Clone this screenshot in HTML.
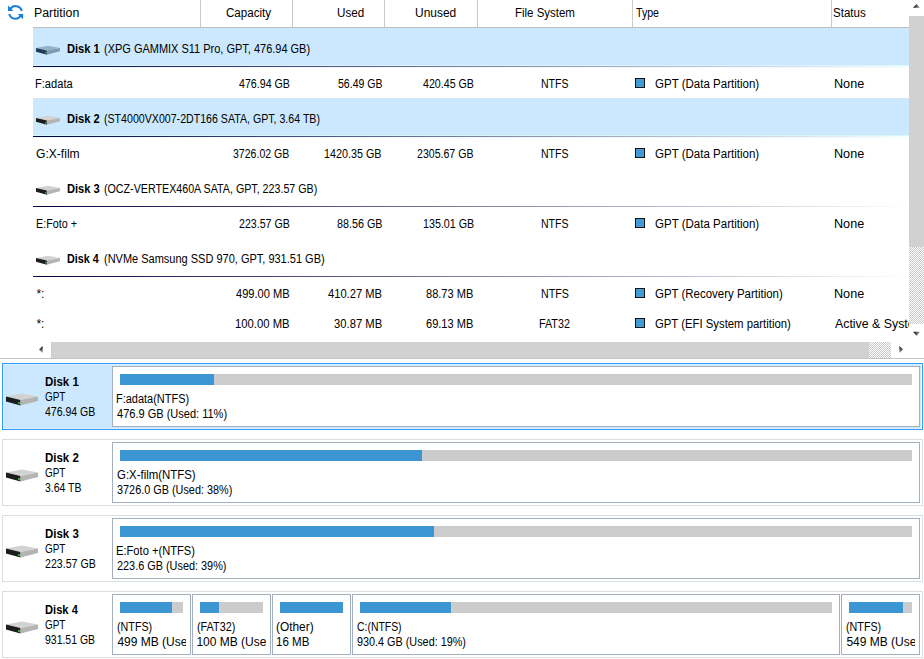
<!DOCTYPE html>
<html><head><meta charset="utf-8"><style>
html,body{margin:0;padding:0;background:#fff;}
body{width:924px;height:659px;position:relative;overflow:hidden;font-family:"Liberation Sans", sans-serif;color:#000;}
.t{position:absolute;transform-origin:0 0;white-space:nowrap;line-height:normal;font-family:"Liberation Sans", sans-serif;font-size:12px;}
.r{position:absolute;}
</style></head><body>
<svg class="r" style="left:0;top:0" width="30" height="26" viewBox="0 0 30 26">
<g fill="none" stroke="#1a80d9" stroke-width="2">
<path d="M10.1 9.2 A6.4 6.4 0 0 1 21.8 10.9"/>
<path d="M9.2 14 A6.4 6.4 0 0 0 20.9 15.6"/>
</g>
<path d="M8 5.6 L8 11 L13.4 11 Z" fill="#1a80d9"/>
<path d="M23.1 19.2 L23.1 13.9 L17.7 13.9 Z" fill="#1a80d9"/>
</svg><div class="t" style="left:34.47px;top:6px;transform:scaleX(1.0279);">Partition</div><div class="t" style="left:226.40px;top:6px;transform:scaleX(0.9660);">Capacity</div><div class="t" style="left:337.43px;top:6px;transform:scaleX(0.9731);">Used</div><div class="t" style="left:415.30px;top:6px;transform:scaleX(0.9975);">Unused</div><div class="t" style="left:515.24px;top:6px;transform:scaleX(0.9557);">File System</div><div class="t" style="left:636.00px;top:6px;transform:scaleX(0.8846);">Type</div><div class="t" style="left:833.34px;top:6px;transform:scaleX(0.9636);">Status</div><div class="r" style="left:200px;top:0px;width:1px;height:27px;background:#c9c9c9;"></div><div class="r" style="left:292px;top:0px;width:1px;height:27px;background:#c9c9c9;"></div><div class="r" style="left:384px;top:0px;width:1px;height:27px;background:#c9c9c9;"></div><div class="r" style="left:477px;top:0px;width:1px;height:27px;background:#c9c9c9;"></div><div class="r" style="left:632px;top:0px;width:1px;height:27px;background:#c9c9c9;"></div><div class="r" style="left:831px;top:0px;width:1px;height:27px;background:#c9c9c9;"></div><div class="r" style="left:33px;top:27px;width:876px;height:1px;background:#bfbfbf;"></div><div class="r" style="left:0;top:28px;width:909px;height:314px;overflow:hidden"><div class="r" style="left:33px;top:0px;width:876px;height:37px;background:#cce8ff;"></div><div class="r" style="left:33px;top:37px;width:876px;height:1px;background:#d9f6ff;"></div><div class="r" style="left:33px;top:39px;width:876px;height:1px;background:#e9fcff;"></div><div class="r" style="left:33px;top:38px;width:876px;height:1px;background:linear-gradient(to right,#000040,#ffffff);"></div><svg class="r" style="left:36px;top:17px" width="24" height="11" viewBox="0 0 32 13">
<polygon points="0,3 16,0 32,3 14.5,6.5" fill="#94b2cb"/>
<polygon points="0,3 14.5,6.5 14.5,12 0,8" fill="#1d3d57"/>
<polygon points="14.5,6.5 32,3 32,7.5 14.5,12" fill="#7b9bb5"/>
<circle cx="13" cy="9.6" r="1.1" fill="#22c83a"/>
</svg><div class="t" style="left:66.87px;top:14px;transform:scaleX(0.9265);font-weight:bold;">Disk 1</div><div class="t" style="left:103.88px;top:14px;transform:scaleX(0.9152);">(XPG GAMMIX S11 Pro, GPT, 476.94 GB)</div><div class="t" style="left:35.48px;top:49px;transform:scaleX(0.9250);">F:adata</div><div class="t" style="left:238.90px;top:49px;transform:scaleX(0.8877);">476.94 GB</div><div class="t" style="left:337.70px;top:49px;transform:scaleX(0.8780);">56.49 GB</div><div class="t" style="left:422.80px;top:49px;transform:scaleX(0.8877);">420.45 GB</div><div class="t" style="left:540.82px;top:49px;transform:scaleX(0.8767);">NTFS</div><div class="r" style="left:635px;top:50px;width:10px;height:10px;background:#409ad6;box-sizing:border-box;border:1px solid #111"></div><div class="t" style="left:655.20px;top:49px;transform:scaleX(0.9602);">GPT (Data Partition)</div><div class="t" style="left:834.35px;top:49px;transform:scaleX(1.0519);">None</div><div class="r" style="left:33px;top:70px;width:876px;height:37px;background:#cce8ff;"></div><div class="r" style="left:33px;top:107px;width:876px;height:1px;background:#d9f6ff;"></div><div class="r" style="left:33px;top:109px;width:876px;height:1px;background:#e9fcff;"></div><div class="r" style="left:33px;top:108px;width:876px;height:1px;background:linear-gradient(to right,#000040,#ffffff);"></div><svg class="r" style="left:36px;top:87px" width="24" height="11" viewBox="0 0 32 13">
<polygon points="0,3 16,0 32,3 14.5,6.5" fill="#d2d2d2"/>
<polygon points="0,3 14.5,6.5 14.5,12 0,8" fill="#1c1c1c"/>
<polygon points="14.5,6.5 32,3 32,7.5 14.5,12" fill="#b4b4b4"/>
<circle cx="13" cy="9.6" r="1.1" fill="#22c83a"/>
</svg><div class="t" style="left:66.87px;top:84px;transform:scaleX(0.9265);font-weight:bold;">Disk 2</div><div class="t" style="left:103.92px;top:84px;transform:scaleX(0.8848);">(ST4000VX007-2DT166 SATA, GPT, 3.64 TB)</div><div class="t" style="left:36.40px;top:119px;transform:scaleX(1.0070);">G:X-film</div><div class="t" style="left:233.20px;top:119px;transform:scaleX(0.8797);">3726.02 GB</div><div class="t" style="left:324.10px;top:119px;transform:scaleX(0.8968);">1420.35 GB</div><div class="t" style="left:417.20px;top:119px;transform:scaleX(0.8812);">2305.67 GB</div><div class="t" style="left:540.82px;top:119px;transform:scaleX(0.8767);">NTFS</div><div class="r" style="left:635px;top:120px;width:10px;height:10px;background:#409ad6;box-sizing:border-box;border:1px solid #111"></div><div class="t" style="left:655.20px;top:119px;transform:scaleX(0.9602);">GPT (Data Partition)</div><div class="t" style="left:834.35px;top:119px;transform:scaleX(1.0519);">None</div><div class="r" style="left:33px;top:178px;width:876px;height:1px;background:linear-gradient(to right,#000040,#ffffff);"></div><svg class="r" style="left:36px;top:157px" width="24" height="11" viewBox="0 0 32 13">
<polygon points="0,3 16,0 32,3 14.5,6.5" fill="#d2d2d2"/>
<polygon points="0,3 14.5,6.5 14.5,12 0,8" fill="#1c1c1c"/>
<polygon points="14.5,6.5 32,3 32,7.5 14.5,12" fill="#b4b4b4"/>
<circle cx="13" cy="9.6" r="1.1" fill="#22c83a"/>
</svg><div class="t" style="left:66.87px;top:154px;transform:scaleX(0.9265);font-weight:bold;">Disk 3</div><div class="t" style="left:103.91px;top:154px;transform:scaleX(0.8908);">(OCZ-VERTEX460A SATA, GPT, 223.57 GB)</div><div class="t" style="left:35.50px;top:189px;transform:scaleX(0.8978);">E:Foto +</div><div class="t" style="left:239.00px;top:189px;transform:scaleX(0.8860);">223.57 GB</div><div class="t" style="left:336.80px;top:189px;transform:scaleX(0.8960);">88.56 GB</div><div class="t" style="left:422.71px;top:189px;transform:scaleX(0.8929);">135.01 GB</div><div class="t" style="left:540.82px;top:189px;transform:scaleX(0.8767);">NTFS</div><div class="r" style="left:635px;top:190px;width:10px;height:10px;background:#409ad6;box-sizing:border-box;border:1px solid #111"></div><div class="t" style="left:655.20px;top:189px;transform:scaleX(0.9602);">GPT (Data Partition)</div><div class="t" style="left:834.35px;top:189px;transform:scaleX(1.0519);">None</div><div class="r" style="left:33px;top:248px;width:876px;height:1px;background:linear-gradient(to right,#000040,#ffffff);"></div><svg class="r" style="left:36px;top:227px" width="24" height="11" viewBox="0 0 32 13">
<polygon points="0,3 16,0 32,3 14.5,6.5" fill="#d2d2d2"/>
<polygon points="0,3 14.5,6.5 14.5,12 0,8" fill="#1c1c1c"/>
<polygon points="14.5,6.5 32,3 32,7.5 14.5,12" fill="#b4b4b4"/>
<circle cx="13" cy="9.6" r="1.1" fill="#22c83a"/>
</svg><div class="t" style="left:66.90px;top:224px;transform:scaleX(0.9000);font-weight:bold;">Disk 4</div><div class="t" style="left:103.88px;top:224px;transform:scaleX(0.9163);">(NVMe Samsung SSD 970, GPT, 931.51 GB)</div><div class="t" style="left:36.40px;top:259px;transform:scaleX(1.0000);">*:</div><div class="t" style="left:236.40px;top:259px;transform:scaleX(0.9241);">499.00 MB</div><div class="t" style="left:327.90px;top:259px;transform:scaleX(0.9293);">410.27 MB</div><div class="t" style="left:425.80px;top:259px;transform:scaleX(0.9216);">88.73 MB</div><div class="t" style="left:540.61px;top:259px;transform:scaleX(0.8900);">NTFS</div><div class="r" style="left:635px;top:260px;width:10px;height:10px;background:#409ad6;box-sizing:border-box;border:1px solid #111"></div><div class="t" style="left:655.20px;top:259px;transform:scaleX(0.9549);">GPT (Recovery Partition)</div><div class="t" style="left:834.35px;top:259px;transform:scaleX(1.0519);">None</div><div class="t" style="left:36.40px;top:289px;transform:scaleX(1.0000);">*:</div><div class="t" style="left:235.46px;top:289px;transform:scaleX(0.9404);">100.00 MB</div><div class="t" style="left:334.00px;top:289px;transform:scaleX(0.9373);">30.87 MB</div><div class="t" style="left:425.80px;top:289px;transform:scaleX(0.9216);">69.13 MB</div><div class="t" style="left:539.40px;top:289px;transform:scaleX(0.8970);">FAT32</div><div class="r" style="left:635px;top:290px;width:10px;height:10px;background:#409ad6;box-sizing:border-box;border:1px solid #111"></div><div class="t" style="left:655.20px;top:289px;transform:scaleX(0.9441);">GPT (EFI System partition)</div><div class="t" style="left:835.40px;top:289px;transform:scaleX(1.0300);">Active &amp; System</div></div><div class="r" style="left:909px;top:16px;width:15px;height:231px;background:#d1d1d1;"></div><div class="r" style="left:909px;top:247px;width:15px;height:77px;background:repeating-conic-gradient(#c8c8c8 0 25%, #ffffff 0 50%) 0 0/2px 2px;"></div><svg class="r" style="left:0;top:0" width="924" height="359"><defs><linearGradient id="gl" x1="0" y1="0" x2="1" y2="0"><stop offset="0" stop-color="#000"/><stop offset="1" stop-color="#aaa"/></linearGradient><linearGradient id="gr" x1="1" y1="0" x2="0" y2="0"><stop offset="0" stop-color="#000"/><stop offset="1" stop-color="#aaa"/></linearGradient><linearGradient id="gt" x1="0" y1="0" x2="0" y2="1"><stop offset="0" stop-color="#000"/><stop offset="1" stop-color="#aaa"/></linearGradient></defs><polygon points="913,7.8 916.5,4 920,7.8" fill="url(#gl)"/><polygon points="913,331.8 920,331.8 916.5,335.8" fill="url(#gl)"/><polygon points="39,349.5 42.6,346 42.6,353" fill="url(#gt)"/><polygon points="903,349.5 899.4,346 899.4,353" fill="url(#gt)"/></svg><div class="r" style="left:51px;top:342px;width:818px;height:16px;background:#d1d1d1;"></div><div class="r" style="left:869px;top:342px;width:22px;height:16px;background:repeating-conic-gradient(#c8c8c8 0 25%, #ffffff 0 50%) 1px 0/2px 2px;"></div><div class="r" style="left:0px;top:358px;width:924px;height:1px;background:#c4c4c4;"></div><div class="r" style="left:2px;top:363px;width:921px;height:67px;background:#cce8ff;box-sizing:border-box;border:1px solid #3399ff;box-shadow:inset 0 0 0 1px #d9f0ff"></div><div class="r" style="left:921px;top:364px;width:1px;height:65px;background:#ffffff;"></div><svg class="r" style="left:6px;top:393px" width="32" height="14" viewBox="0 0 32 13">
<polygon points="0,3 16,0 32,3 14.5,6.5" fill="#d2d2d2"/>
<polygon points="0,3 14.5,6.5 14.5,12 0,8" fill="#1c1c1c"/>
<polygon points="14.5,6.5 32,3 32,7.5 14.5,12" fill="#b4b4b4"/>
<circle cx="13" cy="9.6" r="1.1" fill="#22c83a"/>
</svg><div class="t" style="left:44.54px;top:375px;transform:scaleX(0.9559);font-weight:bold;">Disk 1</div><div class="t" style="left:45.40px;top:390px;transform:scaleX(0.8240);">GPT</div><div class="t" style="left:45.40px;top:405px;transform:scaleX(0.8772);">476.94 GB</div><div class="r" style="left:112px;top:366px;width:808px;height:61px;box-sizing:border-box;border:1px solid #a3aec0;background:#fff;"><div class="r" style="left:7px;top:7px;width:792px;height:11px;background:#cccccc;"></div><div class="r" style="left:7px;top:7px;width:94px;height:11px;background:#3d96d4;"></div><div class="r" style="left:0;top:0;width:802px;height:59px;overflow:hidden"><div class="t" style="left:3.49px;top:25px;transform:scaleX(0.9139);">F:adata(NTFS)</div><div class="t" style="left:4.40px;top:40px;transform:scaleX(0.9185);">476.9 GB (Used: 11%)</div></div></div><div class="r" style="left:2px;top:439px;width:921px;height:67px;background:#ffffff;box-sizing:border-box;border:1px solid #d9dde4"></div><svg class="r" style="left:6px;top:469px" width="32" height="14" viewBox="0 0 32 13">
<polygon points="0,3 16,0 32,3 14.5,6.5" fill="#d2d2d2"/>
<polygon points="0,3 14.5,6.5 14.5,12 0,8" fill="#1c1c1c"/>
<polygon points="14.5,6.5 32,3 32,7.5 14.5,12" fill="#b4b4b4"/>
<circle cx="13" cy="9.6" r="1.1" fill="#22c83a"/>
</svg><div class="t" style="left:44.54px;top:451px;transform:scaleX(0.9559);font-weight:bold;">Disk 2</div><div class="t" style="left:45.40px;top:466px;transform:scaleX(0.8240);">GPT</div><div class="t" style="left:45.40px;top:481px;transform:scaleX(0.8707);">3.64 TB</div><div class="r" style="left:112px;top:442px;width:808px;height:61px;box-sizing:border-box;border:1px solid #a3aec0;background:#fff;"><div class="r" style="left:7px;top:7px;width:792px;height:11px;background:#cccccc;"></div><div class="r" style="left:7px;top:7px;width:302px;height:11px;background:#3d96d4;"></div><div class="r" style="left:0;top:0;width:802px;height:59px;overflow:hidden"><div class="t" style="left:4.40px;top:25px;transform:scaleX(0.9512);">G:X-film(NTFS)</div><div class="t" style="left:4.40px;top:40px;transform:scaleX(0.9055);">3726.0 GB (Used: 38%)</div></div></div><div class="r" style="left:2px;top:515px;width:921px;height:67px;background:#ffffff;box-sizing:border-box;border:1px solid #d9dde4"></div><svg class="r" style="left:6px;top:545px" width="32" height="14" viewBox="0 0 32 13">
<polygon points="0,3 16,0 32,3 14.5,6.5" fill="#d2d2d2"/>
<polygon points="0,3 14.5,6.5 14.5,12 0,8" fill="#1c1c1c"/>
<polygon points="14.5,6.5 32,3 32,7.5 14.5,12" fill="#b4b4b4"/>
<circle cx="13" cy="9.6" r="1.1" fill="#22c83a"/>
</svg><div class="t" style="left:44.54px;top:527px;transform:scaleX(0.9559);font-weight:bold;">Disk 3</div><div class="t" style="left:45.40px;top:542px;transform:scaleX(0.8240);">GPT</div><div class="t" style="left:45.40px;top:557px;transform:scaleX(0.8842);">223.57 GB</div><div class="r" style="left:112px;top:518px;width:808px;height:61px;box-sizing:border-box;border:1px solid #a3aec0;background:#fff;"><div class="r" style="left:7px;top:7px;width:792px;height:11px;background:#cccccc;"></div><div class="r" style="left:7px;top:7px;width:314px;height:11px;background:#3d96d4;"></div><div class="r" style="left:0;top:0;width:802px;height:59px;overflow:hidden"><div class="t" style="left:3.47px;top:25px;transform:scaleX(0.9286);">E:Foto +(NTFS)</div><div class="t" style="left:4.40px;top:40px;transform:scaleX(0.9067);">223.6 GB (Used: 39%)</div></div></div><div class="r" style="left:2px;top:591px;width:921px;height:67px;background:#ffffff;box-sizing:border-box;border:1px solid #d9dde4"></div><svg class="r" style="left:6px;top:621px" width="32" height="14" viewBox="0 0 32 13">
<polygon points="0,3 16,0 32,3 14.5,6.5" fill="#d2d2d2"/>
<polygon points="0,3 14.5,6.5 14.5,12 0,8" fill="#1c1c1c"/>
<polygon points="14.5,6.5 32,3 32,7.5 14.5,12" fill="#b4b4b4"/>
<circle cx="13" cy="9.6" r="1.1" fill="#22c83a"/>
</svg><div class="t" style="left:44.57px;top:603px;transform:scaleX(0.9286);font-weight:bold;">Disk 4</div><div class="t" style="left:45.40px;top:618px;transform:scaleX(0.8240);">GPT</div><div class="t" style="left:45.40px;top:633px;transform:scaleX(0.8719);">931.51 GB</div><div class="r" style="left:112px;top:594px;width:79px;height:61px;box-sizing:border-box;border:1px solid #a3aec0;background:#fff;"><div class="r" style="left:7px;top:7px;width:63px;height:11px;background:#cccccc;"></div><div class="r" style="left:7px;top:7px;width:52px;height:11px;background:#3d96d4;"></div><div class="r" style="left:0;top:0;width:73px;height:59px;overflow:hidden"><div class="t" style="left:3.51px;top:25px;transform:scaleX(0.8947);">(NTFS)</div><div class="t" style="left:4.40px;top:40px;transform:scaleX(1.0000);">499 MB (Used: 82%)</div></div></div><div class="r" style="left:192px;top:594px;width:79px;height:61px;box-sizing:border-box;border:1px solid #a3aec0;background:#fff;"><div class="r" style="left:7px;top:7px;width:63px;height:11px;background:#cccccc;"></div><div class="r" style="left:7px;top:7px;width:19px;height:11px;background:#3d96d4;"></div><div class="r" style="left:0;top:0;width:73px;height:59px;overflow:hidden"><div class="t" style="left:3.50px;top:25px;transform:scaleX(0.9024);">(FAT32)</div><div class="t" style="left:3.40px;top:40px;transform:scaleX(1.0000);">100 MB (Used: 30%)</div></div></div><div class="r" style="left:272px;top:594px;width:79px;height:61px;box-sizing:border-box;border:1px solid #a3aec0;background:#fff;"><div class="r" style="left:7px;top:7px;width:63px;height:11px;background:#cccccc;"></div><div class="r" style="left:7px;top:7px;width:63px;height:11px;background:#3d96d4;"></div><div class="r" style="left:0;top:0;width:73px;height:59px;overflow:hidden"><div class="t" style="left:3.41px;top:25px;transform:scaleX(0.9892);">(Other)</div><div class="t" style="left:3.44px;top:40px;transform:scaleX(0.9636);">16 MB</div></div></div><div class="r" style="left:352px;top:594px;width:488px;height:61px;box-sizing:border-box;border:1px solid #a3aec0;background:#fff;"><div class="r" style="left:7px;top:7px;width:472px;height:11px;background:#cccccc;"></div><div class="r" style="left:7px;top:7px;width:91px;height:11px;background:#3d96d4;"></div><div class="r" style="left:0;top:0;width:482px;height:59px;overflow:hidden"><div class="t" style="left:4.40px;top:25px;transform:scaleX(0.8686);">C:(NTFS)</div><div class="t" style="left:4.40px;top:40px;transform:scaleX(0.9025);">930.4 GB (Used: 19%)</div></div></div><div class="r" style="left:841px;top:594px;width:79px;height:61px;box-sizing:border-box;border:1px solid #a3aec0;background:#fff;"><div class="r" style="left:7px;top:7px;width:63px;height:11px;background:#cccccc;"></div><div class="r" style="left:7px;top:7px;width:54px;height:11px;background:#3d96d4;"></div><div class="r" style="left:0;top:0;width:73px;height:59px;overflow:hidden"><div class="t" style="left:3.51px;top:25px;transform:scaleX(0.8947);">(NTFS)</div><div class="t" style="left:4.40px;top:40px;transform:scaleX(1.0000);">549 MB (Used: 86%)</div></div></div>
</body></html>
